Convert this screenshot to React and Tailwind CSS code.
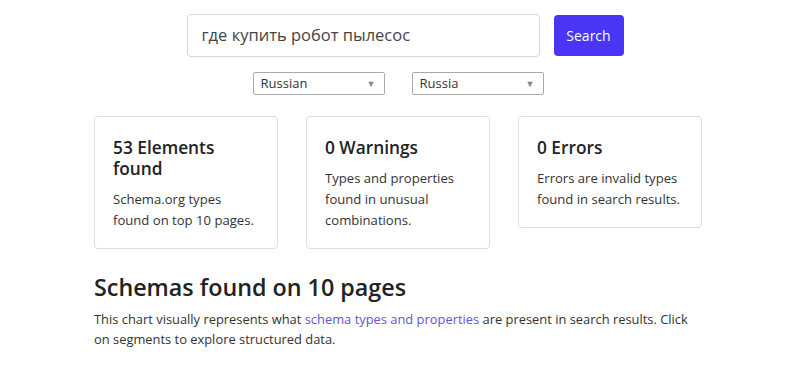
import React from 'react';

const font = { fontFamily: '"Open Sans", "Noto Sans", Arial, sans-serif' };

const StatCard = ({ title, children }) => (
  <div className="w-[184px] self-start rounded border border-[#dfdfdf] bg-white px-[18px] pt-[20px] pb-[17px]">
    <h3 className="text-[17.3px] font-semibold leading-[21px] text-[#222]">{title}</h3>
    <p className="mt-[10px] text-[13.1px] leading-[21px] text-[#333]">{children}</p>
  </div>
);

const Select = ({ value, width }) => (
  <div className={`flex h-[23px] ${width} items-center justify-between rounded-[2px] border border-[#aaa] bg-white pl-[7px] pr-[8px]`}>
    <span className="text-[13px] text-[#333]">{value}</span>
    <span className="text-[9px] text-[#888]">▼</span>
  </div>
);

export default function App() {
  return (
    <div className="min-h-[368px] w-[800px] bg-white" style={font}>
      <div className="flex flex-col items-center pt-[14px]">
        {/* Search bar */}
        <div className="ml-[10px] flex items-center gap-[14px]">
          <div className="flex h-[43px] w-[353px] items-center rounded border border-[#d6d6d6] px-[14px]">
            <span className="text-[16.5px] text-[#444]">где купить робот пылесос</span>
          </div>
          <button className="h-[41px] w-[70px] rounded bg-[#4b35f5] text-[14px] text-white">Search</button>
        </div>

        {/* Language / region */}
        <div className="mt-[15px] mr-[4px] flex gap-[27px]">
          <Select value="Russian" width="w-[132px]" />
          <Select value="Russia" width="w-[132px]" />
        </div>
      </div>

      <div className="mx-auto w-[608px] -translate-x-[2px] pt-[21px]">
        {/* Stat cards */}
        <div className="flex gap-[28px]">
          <StatCard title="53 Elements found">
            Schema.org types found on top 10 pages.
          </StatCard>
          <StatCard title="0 Warnings">
            Types and properties found in unusual combinations.
          </StatCard>
          <StatCard title="0 Errors">
            Errors are invalid types found in search results.
          </StatCard>
        </div>

        {/* Schemas heading */}
        <h2 className="mt-[22px] text-[23.3px] font-semibold leading-[32px] text-[#222]">Schemas found on 10 pages</h2>
        <p className="mt-[6px] text-[12.9px] leading-[20px] text-[#333]">
          This chart visually represents what{' '}
          <a className="text-[#6554d4]">schema types and properties</a>{' '}
          are present in search results. Click on segments to explore structured data.
        </p>
      </div>
    </div>
  );
}
